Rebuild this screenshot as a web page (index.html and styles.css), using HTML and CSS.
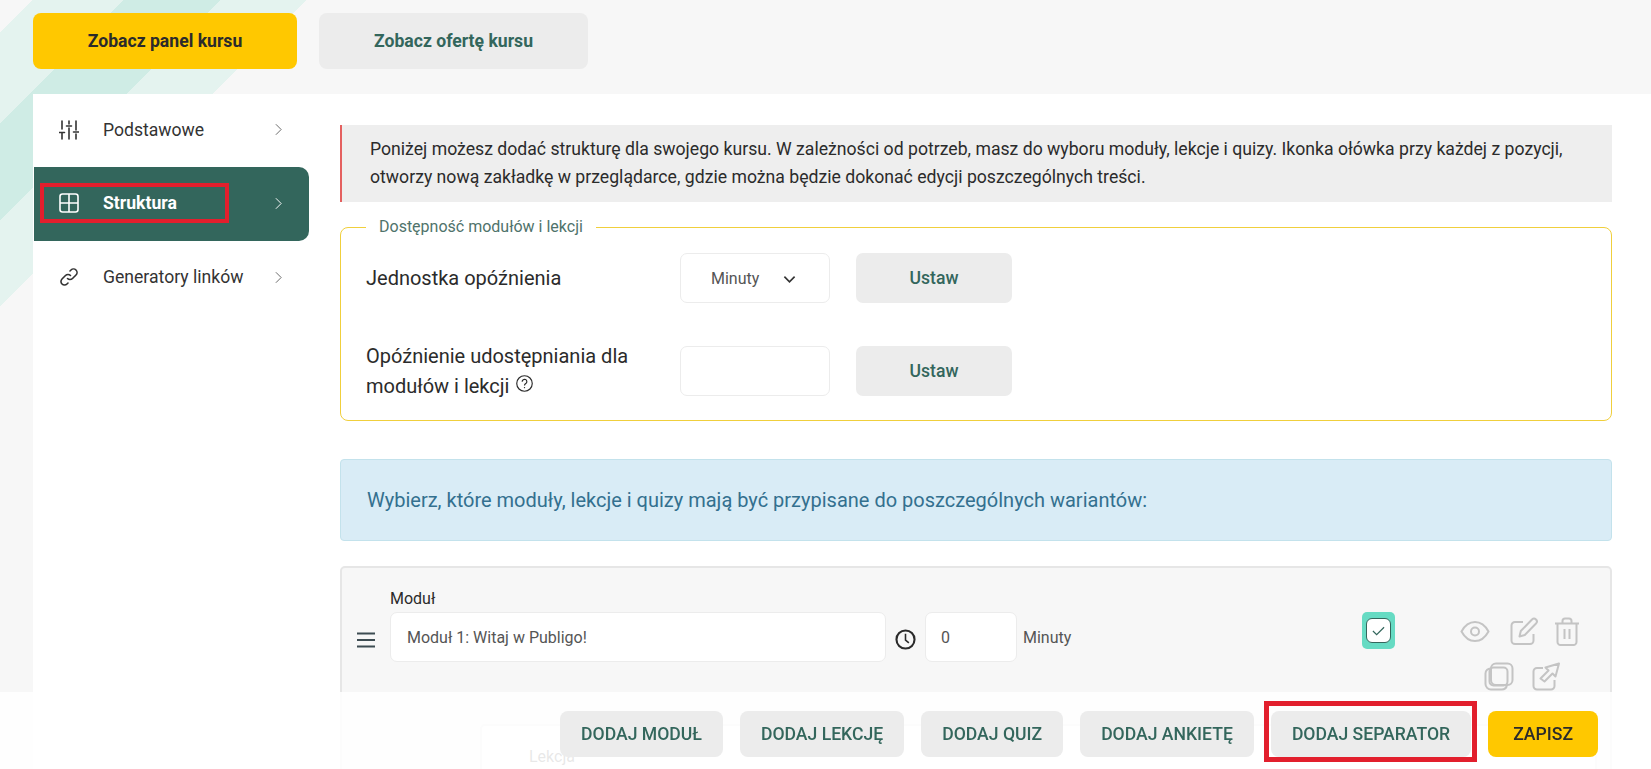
FILE: index.html
```html
<!DOCTYPE html>
<html lang="pl">
  <head>
    <meta charset="UTF-8" />
    <meta name="viewport" content="width=device-width, initial-scale=1.0" />
    <title>Struktura kursu</title>
    <link rel="stylesheet" href="styles.css">
  </head>
  <body>
    <div class="top-actions">
      <a class="btn-top btn-yellow">Zobacz panel kursu</a>
      <a class="btn-top btn-grey">Zobacz ofertę kursu</a>
    </div>

    <div class="panel">
      <nav class="sidebar">
        <a class="menu-item">
          <svg class="menu-icon" viewBox="0 0 20 20" fill="none" stroke="currentColor" stroke-width="1.6" stroke-linecap="round">
            <path d="M3 1v8M3 13v6M10 1v3M10 8v11M17 1v9M17 14v5M0.5 12.5h5M7.5 6h5M14.500 12h5"/>
          </svg>
          <span class="menu-label">Podstawowe</span>
          <svg class="menu-arrow" viewBox="0 0 8 14" fill="none" stroke="currentColor" stroke-width="1.1"><path d="M1 1l6 6-6 6"/></svg>
        </a>
        <a class="menu-item active">
          <svg class="menu-icon" viewBox="0 0 20 20" fill="none" stroke="currentColor" stroke-width="1.6">
            <rect x="1" y="1" width="18" height="18" rx="2.500"/>
            <path d="M10 1v18M1 10h18"/>
          </svg>
          <span class="menu-label">Struktura</span>
          <svg class="menu-arrow" viewBox="0 0 8 14" fill="none" stroke="currentColor" stroke-width="1.1"><path d="M1 1l6 6-6 6"/></svg>
        </a>
        <a class="menu-item">
          <svg class="menu-icon" viewBox="0 0 20 20" fill="none" stroke="currentColor" stroke-width="1.6" stroke-linecap="round">
            <path d="M8.500 11.500a3.500 3.500 0 0 0 5 0l3.500-3.500a3.500 3.500 0 0 0-5-5l-1 1"/>
            <path d="M11.500 8.500a3.500 3.500 0 0 0-5 0l-3.500 3.500a3.500 3.500 0 0 0 5 5l1-1"/>
          </svg>
          <span class="menu-label">Generatory linków</span>
          <svg class="menu-arrow" viewBox="0 0 8 14" fill="none" stroke="currentColor" stroke-width="1.1"><path d="M1 1l6 6-6 6"/></svg>
        </a>
      </nav>

      <main class="content">
        <p class="notice">
          Poniżej możesz dodać strukturę dla swojego kursu. W zależności od potrzeb, masz do wyboru moduły, lekcje i quizy. Ikonka ołówka przy każdej z pozycji, otworzy nową zakładkę w przeglądarce, gdzie można będzie dokonać edycji poszczególnych treści.
        </p>

        <fieldset class="delay-box">
          <legend>Dostępność modułów i lekcji</legend>
          <div class="delay-row">
            <label class="delay-label">Jednostka opóźnienia</label>
            <div class="field select-field">
              <span>Minuty</span>
              <svg viewBox="0 0 14 9" fill="none" stroke="currentColor" stroke-width="1.800"><path d="M1.500 1.500L7 7l5.500-5.500"/></svg>
            </div>
            <button class="btn-grey btn-set">Ustaw</button>
          </div>
          <div class="delay-row">
            <label class="delay-label">Opóźnienie udostępniania dla modułów i lekcji
              <svg class="help-icon" viewBox="0 0 16 16" fill="none" stroke="currentColor" stroke-width="1.1">
                <circle cx="8" cy="8" r="7.300"/>
                <path d="M5.800 6.300a2.200 2.200 0 1 1 3.400 1.800c-.8.500-1.200.9-1.200 1.800"/>
                <path d="M8 11.400v1"/>
              </svg>
            </label>
            <div class="field"></div>
            <button class="btn-grey btn-set">Ustaw</button>
          </div>
        </fieldset>

        <div class="info-box">Wybierz, które moduły, lekcje i quizy mają być przypisane do poszczególnych wariantów:</div>

        <section class="module">
          <div class="module-row">
            <svg class="handle" viewBox="0 0 20 16" fill="none" stroke="#3d4c52" stroke-width="1.800"><path d="M1 1.500h18M1 8h18M1 14.500h18"/></svg>
            <div class="module-name">
              <label>Moduł</label>
              <div class="field">Moduł 1: Witaj w Publigo!</div>
            </div>
            <svg class="clock" viewBox="0 0 20 20" fill="none" stroke="#2a2a2a" stroke-width="2">
              <circle cx="10" cy="10" r="8.600"/>
              <path d="M10 4.500V10.500l3.200 2.800" stroke-width="1.500"/>
            </svg>
            <div class="field delay-value">0</div>
            <span class="delay-unit">Minuty</span>
            <span class="check-wrap">
              <span class="check-box">
                <svg viewBox="0 0 14 10" fill="none" stroke="#33665c" stroke-width="1.300"><path d="M1 5l4 4 8-8"/></svg>
              </span>
            </span>
            <div class="module-actions">
              <svg class="w30" viewBox="0 0 30 22" fill="none" stroke="#c4c4c4" stroke-width="2">
                <path d="M1.500 11C5 4.500 9.500 1.500 15 1.500S25 4.500 28.500 11C25 17.500 20.500 20.500 15 20.500S5 17.500 1.500 11z"/>
                <circle cx="15" cy="11" r="4"/>
              </svg>
              <svg class="w28 edit-icon" viewBox="0 0 28 29" fill="none" stroke="#c4c4c4" stroke-width="2" stroke-linejoin="round">
                <path d="M13 5H5a3.500 3.500 0 0 0-3.500 3.500v15A3.500 3.500 0 0 0 5 27h15a3.500 3.500 0 0 0 3.500-3.500V17"/>
                <path d="M9.500 19.500l1.300-5.500L22 2.500a2.800 2.800 0 0 1 4 4L14.800 18z"/>
              </svg>
              <svg class="w26" viewBox="0 0 26 29" fill="none" stroke="#c4c4c4" stroke-width="2" stroke-linejoin="round">
                <path d="M1 6.500h24M8.500 6.500V4a2.500 2.500 0 0 1 2.500-2.500h4A2.500 2.500 0 0 1 17.500 4v2.500"/>
                <path d="M3.500 6.500v18.500A3 3 0 0 0 6.500 28h13a3 3 0 0 0 3-3V6.500M10.500 12v10M15.500 12v10"/>
              </svg>
              <svg class="w30 copy-icon" viewBox="0 0 30 29" fill="none" stroke="#c4c4c4" stroke-width="2">
                <rect x="7" y="1.500" width="21.500" height="21.500" rx="5"/>
                <path d="M7 6.500a5 5 0 0 0-5.500 5V22a5.500 5.500 0 0 0 5.500 5.500h10.500A5.500 5.500 0 0 0 23 23"/>
                <rect x="5.500" y="5.500" width="18" height="18" rx="4"/>
              </svg>
              <svg class="w28" viewBox="0 0 28 29" fill="none" stroke="#c4c4c4" stroke-width="2" stroke-linejoin="round">
                <path d="M11 6H5a3.500 3.500 0 0 0-3.500 3.500V24A3.500 3.500 0 0 0 5 27.500h14a3.500 3.500 0 0 0 3.500-3.500v-6"/>
                <path d="M8.500 16.500l8-8-3-3L27 1.500l-3.500 13-3-3-8 8z"/>
              </svg>
            </div>
          </div>

          <div class="lesson">
            <label>Lekcja</label>
          </div>
        </section>
      </main>
    </div>

    <footer class="bottom-bar">
      <button class="btn-grey btn-bar">Dodaj moduł</button>
      <button class="btn-grey btn-bar">Dodaj lekcję</button>
      <button class="btn-grey btn-bar">Dodaj quiz</button>
      <button class="btn-grey btn-bar">Dodaj ankietę</button>
      <button class="btn-grey btn-bar marked">Dodaj separator</button>
      <button class="btn-yellow btn-bar btn-save">Zapisz</button>
    </footer>
  </body>
</html>
```

FILE: styles.css
```css
html {
  overflow: hidden;
  height: 100%;
}

body {
  font-family: "Roboto", sans-serif;
  margin: 0;
  height: 100%;
  overflow: hidden;
  color: #2b2b2b;
  background-color: #f7f7f7;
  background-image: linear-gradient(
    135deg,
    #f7f7f7 23px,
    #e4f3ef 23px 87px,
    #cfece5 87px 156px,
    #e4f3ef 156px 217px,
    #f7f7f7 217px
  );
  background-size: 320px 320px;
  background-repeat: no-repeat;
}

.top-actions {
  display: flex;
  gap: 22px;
  padding: 13px 33px 25px;
}

.btn-top {
  display: flex;
  align-items: center;
  justify-content: center;
  width: 264px;
  height: 56px;
  border-radius: 8px;
  font-size: 17.6px;
  font-weight: 700;
}

.btn-top.btn-grey {
  width: 269px;
}

.btn-yellow {
  background: #ffc800;
  color: #2b2b2b;
}

.btn-grey {
  background: #ececec;
  color: #33665c;
}

button {
  font-family: inherit;
  border: none;
  cursor: pointer;
}

.panel {
  display: flex;
  margin-left: 33px;
  background: #ffffff;
}

.sidebar {
  flex: 0 0 276px;
}

.menu-item {
  position: relative;
  display: flex;
  align-items: center;
  box-sizing: border-box;
  height: 74px;
  padding: 0 27px 2px 26px;
  font-size: 17.6px;
  font-weight: 400;
  color: #333;
}

.menu-item:first-child {
  height: 73px;
}

.menu-item.active {
  margin-left: 1px;
  padding-left: 25px;
  background: #33665c;
  color: #ffffff;
  font-weight: 700;
  border-radius: 0 10px 10px 0;
}

/* red frame from the annotated screenshot */
.menu-item.active::after {
  content: "";
  position: absolute;
  top: 16px;
  left: 6px;
  width: 189px;
  height: 40px;
  box-sizing: border-box;
  border: 4px solid #e21f2d;
}

.menu-icon {
  flex: none;
  width: 20px;
  height: 20px;
  margin-right: 24px;
}

.menu-label {
  flex: 1;
}

.menu-arrow {
  flex: none;
  width: 7px;
  height: 13px;
  color: #666;
}

.active .menu-arrow {
  color: #fff;
}

.content {
  flex: 1;
  min-width: 0;
  padding: 31px 39px 0 31px;
}

.notice {
  margin: 0;
  padding: 10px 16px 11px 28px;
  background: #eeeeee;
  border-left: 2px solid #e4605f;
  font-size: 17.65px;
  line-height: 28px;
  color: #2b2b2b;
}

.delay-box {
  margin: 15px 0 0;
  padding: 16px 0 24px;
  border: 1px solid #f0cf3c;
  border-radius: 8px;
  min-width: 0;
}

.delay-box legend {
  margin-left: 25px;
  padding: 0 13px;
  font-size: 16px;
  line-height: 20px;
  color: #4f736b;
}

.delay-row {
  display: flex;
  align-items: center;
  gap: 26px;
  height: 50px;
  padding-left: 25px;
}

.delay-row + .delay-row {
  margin-top: 43px;
}

.delay-label {
  width: 288px;
  font-size: 20px;
  font-weight: 400;
  line-height: 30px;
  color: #2b2b2b;
}

.help-icon {
  width: 17px;
  height: 17px;
  margin-left: 2px;
  vertical-align: 1px;
}

.field {
  box-sizing: border-box;
  display: flex;
  align-items: center;
  width: 150px;
  height: 50px;
  background: #ffffff;
  border: 1px solid #ececec;
  border-radius: 7px;
  font-size: 16px;
  color: #555;
}

.select-field {
  padding-left: 30px;
  justify-content: flex-start;
  gap: 24px;
}

.select-field svg {
  width: 13px;
  height: 9px;
  color: #333;
  margin-top: 3px;
}

.btn-set {
  width: 156px;
  height: 50px;
  border-radius: 7px;
  font-size: 17.6px;
  font-weight: 500;
}

.info-box {
  display: flex;
  align-items: center;
  box-sizing: border-box;
  height: 82px;
  margin-top: 38px;
  padding-left: 26px;
  background: #d9ecf6;
  border: 1px solid #c3e2ec;
  border-radius: 4px;
  font-size: 20px;
  color: #33708f;
}

.module {
  margin-top: 25px;
  padding: 22px 13px 0 14px;
  background: #f7f7f7;
  border: 2px solid #e6e6e6;
  border-radius: 5px;
}

.module-row {
  display: flex;
  align-items: flex-start;
}

.handle {
  flex: none;
  width: 20px;
  height: 16px;
  margin: 42px 14px 0 0;
}

.module-name {
  flex: none;
  width: 496px;
}

.module-name label {
  display: block;
  height: 22px;
  font-size: 16px;
  font-weight: 400;
  line-height: 18px;
  color: #2b2b2b;
}

.module-name .field {
  width: 100%;
  padding-left: 16px;
}

.clock {
  flex: none;
  width: 21px;
  height: 21px;
  margin: 39px 9px 0 9px;
}

.delay-value {
  flex: none;
  width: 92px;
  margin-top: 22px;
  padding-left: 15px;
}

.delay-unit {
  flex: none;
  width: 339px;
  margin: 38px 0 0 6px;
  font-size: 16px;
  color: #555;
}

.check-wrap {
  flex: none;
  display: flex;
  align-items: center;
  justify-content: center;
  width: 33px;
  height: 37px;
  margin-top: 22px;
  background: #66dbc3;
  border-radius: 5px;
}

.check-box {
  display: flex;
  align-items: center;
  justify-content: center;
  box-sizing: border-box;
  width: 25px;
  height: 25px;
  background: #fff;
  border: 1px solid #33665c;
  border-radius: 6px;
}

.check-box svg {
  width: 13px;
  height: 10px;
}

.module-actions {
  flex: none;
  display: flex;
  flex-wrap: wrap;
  justify-content: center;
  align-items: center;
  gap: 16px 18px;
  width: 122px;
  margin: 27px 0 0 64px;
}

.w30 { width: 30px; height: 29px; }
.w28 { width: 28px; height: 29px; }
.w26 { width: 26px; height: 29px; }

.edit-icon {
  margin: 0 -2px 0 2px;
}

.copy-icon {
  margin-left: 3px;
}

.lesson {
  height: 120px;
  margin: 33px 0 0 124px;
  padding: 21px 0 0 47px;
  background: #fff;
  border: 2px solid #e8e8e8;
  border-radius: 5px;
}

.lesson label {
  font-size: 16px;
  line-height: 18px;
  color: #666;
}

.bottom-bar {
  position: fixed;
  left: 0;
  right: 0;
  bottom: 0;
  box-sizing: border-box;
  height: 77px;
  display: flex;
  justify-content: flex-end;
  gap: 17px;
  padding: 19px 53px 0 0;
  background: rgba(255, 255, 255, 0.85);
}

.btn-bar {
  position: relative;
  height: 46px;
  padding: 0 21px;
  border-radius: 8px;
  font-size: 17.6px;
  font-weight: 500;
  text-transform: uppercase;
}

.btn-save {
  padding: 0 25px;
}

.btn-bar.marked::after {
  content: "";
  position: absolute;
  top: -10px;
  left: -7px;
  right: -6px;
  bottom: -5px;
  border: 5px solid #e21f2d;
}
```
